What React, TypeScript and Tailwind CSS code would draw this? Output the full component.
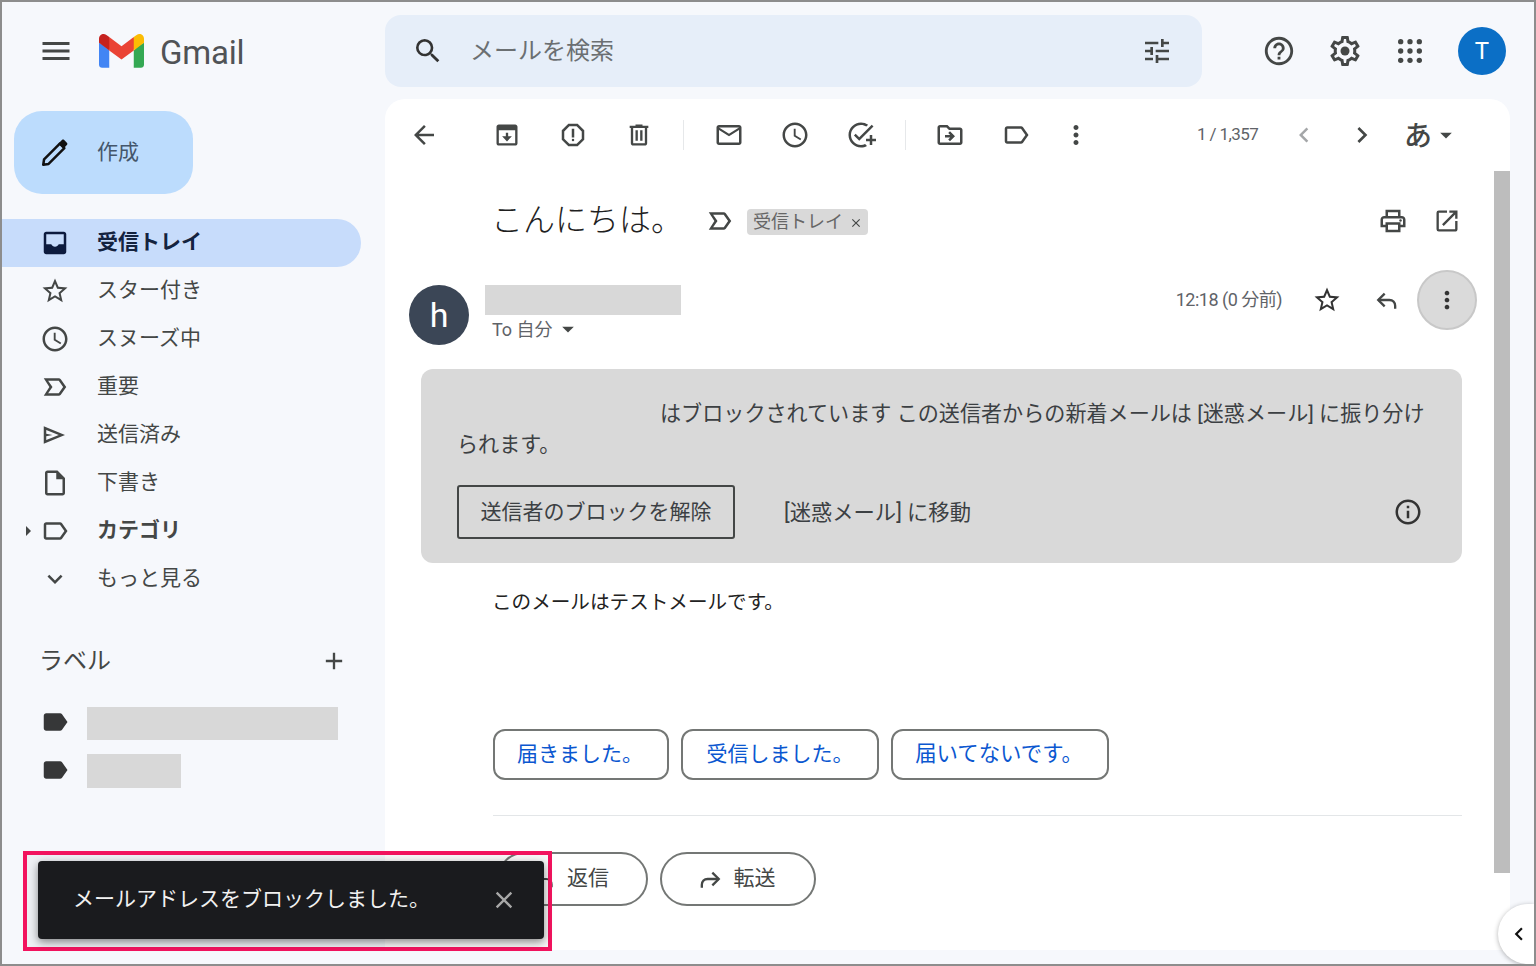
import React from 'react';
import {
  MdAdd,
  MdArrowBack,
  MdArrowDropDown,
  MdArrowRight,
  MdChevronLeft,
  MdChevronRight,
  MdClose,
  MdExpandMore,
  MdHelpOutline,
  MdLabel,
  MdMenu,
  MdMoreVert,
  MdOpenInNew,
  MdOutlineAccessTime,
  MdOutlineAddTask,
  MdOutlineDriveFileMove,
  MdOutlineEmail,
  MdOutlineInfo,
  MdOutlineInsertDriveFile,
  MdOutlineLabel,
  MdOutlinePrint,
  MdOutlineReport,
  MdSearch,
  MdStarBorder,
  MdTune,
} from 'react-icons/md';

type IconProps = { size?: number; color?: string; className?: string };
type IconLike = React.ComponentType<IconProps>;

const GmailLogo = () => (
  <svg viewBox="0 0 256 193" className="h-[34px] w-[45px]">
    <path fill="#4285F4" d="M58.182 192.05V93.14L27.507 65.077 0 49.504v125.091c0 9.658 7.825 17.455 17.455 17.455h40.727Z" />
    <path fill="#34A853" d="M197.818 192.05h40.727c9.659 0 17.455-7.826 17.455-17.455V49.505l-31.156 17.837-27.026 25.798v98.91Z" />
    <path fill="#EA4335" d="m58.182 93.14-4.174-38.647 4.174-36.989L128 69.868l69.818-52.364 4.669 34.992-4.669 40.644L128 145.504z" />
    <path fill="#FBBC04" d="M197.818 17.504V93.14L256 49.504V26.231c0-21.585-24.64-33.89-41.89-20.945l-16.292 12.218Z" />
    <path fill="#C5221F" d="m0 49.504 26.759 20.07L58.182 93.14V17.504L41.89 5.286C24.61-7.66 0 4.646 0 26.23v23.273Z" />
  </svg>
);

const PencilIcon = () => (
  <svg viewBox="0 0 24 24" className="h-[32px] w-[32px]">
    <path d="M3.2 20.8l.6-4L15.6 5l3.4 3.4L7.2 20.2z" fill="none" stroke="#111" strokeWidth="1.9" strokeLinejoin="round" />
    <path d="M14.6 4.8l2.6-2.5c.5-.5 1.2-.5 1.7 0l2 2c.5.5.5 1.2 0 1.7l-2.5 2.6z" fill="#111" />
  </svg>
);

const ArchiveIcon = ({ size = 24, color = '#444746', className }: IconProps) => (
  <svg viewBox="0 0 24 24" width={size} height={size} fill={color} className={className}>
    <path d="M19 3H5c-1.1 0-2 .9-2 2v14c0 1.1.9 2 2 2h14c1.1 0 2-.9 2-2V5c0-1.1-.9-2-2-2zm0 16H5V8h14v11z" />
    <path d="M12 17.5L7.8 13H11v-3h2v3h3.2z" />
  </svg>
);

const DeleteIcon = ({ size = 24, color = '#444746', className }: IconProps) => (
  <svg viewBox="0 0 24 24" width={size} height={size} fill={color} className={className}>
    <path d="M15 4V3H9v1H4v2h1v13c0 1.1.9 2 2 2h10c1.1 0 2-.9 2-2V6h1V4h-5zm2 15H7V6h10v13zM9 8h2v9H9zm4 0h2v9h-2z" />
  </svg>
);

const InboxIcon = ({ size = 24, color = '#444746', className }: IconProps) => (
  <svg viewBox="0 0 24 24" width={size} height={size} fill={color} className={className}>
    <path d="M19 3H5c-1.1 0-2 .9-2 2v14c0 1.1.9 2 2 2h14c1.1 0 2-.9 2-2V5c0-1.1-.9-2-2-2zm0 10h-4c-.7 1.3-1.6 2-3 2s-2.3-.7-3-2H5V5h14v8z" />
  </svg>
);

const ImportantIcon = ({ size = 24, color = '#444746', className }: IconProps) => (
  <svg viewBox="0 0 24 24" width={size} height={size} fill={color} className={className}>
    <path d="M15 19H3l4.5-7L3 5h12c.65 0 1.26.31 1.63.84L21 12l-4.37 6.16c-.37.53-.98.84-1.63.84zm-8.5-2H15l3.5-5L15 7H6.5l3.5 5-3.5 5z" />
  </svg>
);

const SendIcon = ({ size = 24, color = '#444746', className }: IconProps) => (
  <svg viewBox="0 0 24 24" width={size} height={size} fill={color} className={className}>
    <path d="M3 5v14l17-7L3 5zm2 3l10 4-10 4v-3l5-1-5-1V8z" />
  </svg>
);

const ReplyIcon = ({ size = 24, color = '#444746', className }: IconProps) => (
  <svg viewBox="0 0 24 24" width={size} height={size} fill="none" stroke={color} strokeWidth="2" className={className}>
    <path d="M10 6.5L4.5 12l5.5 5.5" />
    <path d="M4.5 12H14c3 0 5 2 5 5v2.5" />
  </svg>
);

const ForwardIcon = () => (
  <svg viewBox="0 0 24 24" className="h-[28px] w-[28px]" fill="none" stroke="#444746" strokeWidth="2">
    <path d="M14 6.5l5.5 5.5-5.5 5.5" />
    <path d="M19.5 12H10c-3 0-5 2-5 5v2.5" />
  </svg>
);

const GearIcon = ({ size = 24, color = '#444746', className }: IconProps) => (
  <svg viewBox="0 0 24 24" width={size} height={size} fill={color} className={className}>
    <path d="M19.43 12.98c.04-.32.07-.64.07-.98 0-.34-.03-.66-.07-.98l2.11-1.65c.19-.15.24-.42.12-.64l-2-3.46c-.09-.16-.26-.25-.44-.25-.06 0-.12.01-.17.03l-2.49 1c-.52-.4-1.08-.73-1.69-.98l-.38-2.65C14.46 2.18 14.25 2 14 2h-4c-.25 0-.46.18-.49.42l-.38 2.65c-.61.25-1.17.59-1.69.98l-2.49-1c-.06-.02-.12-.03-.18-.03-.17 0-.34.09-.43.25l-2 3.46c-.13.22-.07.49.12.64l2.11 1.65c-.04.32-.07.65-.07.98 0 .33.03.66.07.98l-2.11 1.65c-.19.15-.24.42-.12.64l2 3.46c.09.16.26.25.44.25.06 0 .12-.01.17-.03l2.49-1c.52.4 1.08.73 1.69.98l.38 2.65c.03.24.24.42.49.42h4c.25 0 .46-.18.49-.42l.38-2.65c.61-.25 1.17-.59 1.69-.98l2.49 1c.06.02.12.03.18.03.17 0 .34-.09.43-.25l2-3.46c.12-.22.07-.49-.12-.64l-2.11-1.65zm-1.98-1.71c.04.31.05.52.05.73 0 .21-.02.43-.05.73l-.14 1.13.89.7 1.08.84-.7 1.21-1.27-.51-1.04-.42-.9.68c-.43.32-.84.56-1.25.73l-1.06.43-.16 1.13-.2 1.35h-1.4l-.19-1.35-.16-1.13-1.06-.43c-.43-.18-.83-.41-1.23-.71l-.91-.7-1.06.43-1.27.51-.7-1.21 1.08-.84.89-.7-.14-1.13c-.03-.31-.05-.54-.05-.74s.02-.43.05-.73l.14-1.13-.89-.7-1.08-.84.7-1.21 1.27.51 1.04.42.9-.68c.43-.32.84-.56 1.25-.73l1.06-.43.16-1.13.2-1.35h1.39l.19 1.35.16 1.13 1.06.43c.43.18.83.41 1.23.71l.91.7 1.06-.43 1.27-.51.7 1.21-1.07.85-.89.7.14 1.13z" />
    <circle cx="12" cy="12" r="3" />
  </svg>
);

const AppsIcon = ({ size = 24, color = '#444746', className }: IconProps) => (
  <svg viewBox="0 0 24 24" width={size} height={size} fill={color} className={className}>
    {[5, 12, 19].map((y) => [5, 12, 19].map((x) => <circle key={`${x}-${y}`} cx={x} cy={y} r="2" />))}
  </svg>
);

const ToolButton = ({ icon: Icon, className = 'w-[66px]' }: { icon: IconLike; className?: string }) => (
  <span className={`flex items-center justify-center ${className}`}>
    <Icon size={30} color="#444746" />
  </span>
);

const Divider = ({ className }: { className: string }) => <span className={`h-[30px] w-px bg-[#e6e8ea] ${className}`} />;

const navItems: { label: string; icon: IconLike; active?: boolean; bold?: boolean; caret?: boolean }[] = [
  { label: '受信トレイ', icon: InboxIcon, active: true, bold: true },
  { label: 'スター付き', icon: MdStarBorder },
  { label: 'スヌーズ中', icon: MdOutlineAccessTime },
  { label: '重要', icon: ImportantIcon },
  { label: '送信済み', icon: SendIcon },
  { label: '下書き', icon: MdOutlineInsertDriveFile },
  { label: 'カテゴリ', icon: MdOutlineLabel, bold: true, caret: true },
  { label: 'もっと見る', icon: MdExpandMore },
];

const Sidebar = () => (
  <aside className="flex w-[383px] shrink-0 flex-col">
    <button className="ml-[12px] mt-[12px] flex h-[83px] w-[179px] items-center rounded-[28px] bg-[#bcdcfd] pl-[25px] text-[21px] text-[#44566b]">
      <PencilIcon />
      <span className="ml-[26px] mt-[1px]">作成</span>
    </button>

    {/* mailbox list */}
    <nav className="mt-[25px] flex flex-col">
      {navItems.map((item) => {
        const Icon = item.icon;
        return (
          <div
            key={item.label}
            className={`flex h-[48px] w-[359px] items-center rounded-r-full pl-[38px] text-[21px] ${
              item.active ? 'bg-[#c7dcfb] text-[#14233f]' : 'text-[#444746]'
            } ${item.bold ? 'font-bold' : ''} ${item.bold && !item.active ? 'text-[#2a2b2c]' : ''}`}
          >
            <span className="relative flex w-[30px] justify-center">
              {item.caret && (
                <span className="absolute left-[-24px] top-[3px]">
                  <MdArrowRight size={24} color="#444746" />
                </span>
              )}
              <Icon size={30} color={item.active ? '#0d1b3e' : '#444746'} />
            </span>
            <span className="ml-[27px] whitespace-nowrap">{item.label}</span>
          </div>
        );
      })}
    </nav>

    {/* labels */}
    <div className="ml-[37px] mr-[37px] mt-[40px] flex h-[36px] items-center justify-between text-[24px] text-[#444746]">
      <span>ラベル</span>
      <MdAdd size={28} color="#444746" />
    </div>
    <div className="mt-[28px] flex h-[33px] items-center pl-[38px]">
      <span className="-mt-[4px] flex w-[30px] justify-center">
        <MdLabel size={30} color="#363738" />
      </span>
      <span className="ml-[17px] h-[33px] w-[251px] bg-[#d8d8d8]" />
    </div>
    <div className="mt-[14px] flex h-[34px] items-center pl-[38px]">
      <span className="-mt-[2px] flex w-[30px] justify-center">
        <MdLabel size={30} color="#363738" />
      </span>
      <span className="ml-[17px] h-[34px] w-[94px] bg-[#d8d8d8]" />
    </div>
  </aside>
);

const Toolbar = () => (
  <div className="flex h-[72px] shrink-0 items-center pl-[6px]">
    <ToolButton icon={MdArrowBack} />
    <span className="ml-[17px] flex w-[66px] justify-center">
      <ArchiveIcon size={28} />
    </span>
    <ToolButton icon={MdOutlineReport} />
    <span className="flex w-[66px] justify-center">
      <DeleteIcon size={28} />
    </span>
    <Divider className="ml-[11px] mr-[12px]" />
    <ToolButton icon={MdOutlineEmail} />
    <ToolButton icon={MdOutlineAccessTime} />
    <ToolButton icon={MdOutlineAddTask} />
    <Divider className="ml-[11px] mr-[11px]" />
    <ToolButton icon={MdOutlineDriveFileMove} />
    <ToolButton icon={MdOutlineLabel} />
    <ToolButton icon={MdMoreVert} className="w-[54px]" />
    <span className="ml-[94px] w-[78px] whitespace-nowrap text-[17px] tracking-[-0.6px] text-[#5f6368]">1 / 1,357</span>
    <span className="flex w-[58px] justify-center">
      <MdChevronLeft size={30} color="#a4a6a8" />
    </span>
    <span className="flex w-[58px] justify-center">
      <MdChevronRight size={32} color="#444746" />
    </span>
    <span className="ml-[13px] mt-[4px] text-[28px] font-medium leading-none text-[#444746]">あ</span>
    <MdArrowDropDown size={28} color="#444746" />
  </div>
);

const SenderRow = () => (
  <div className="mt-[27px] flex h-[75px] pl-[24px] pr-[17px]">
    <div className="mt-[15px] flex h-[60px] w-[60px] shrink-0 items-center justify-center rounded-full bg-[#3b4656] text-[34px] text-white">
      h
    </div>
    <div className="ml-[16px] mt-[15px] flex flex-col">
      <span className="h-[30px] w-[196px] bg-[#d8d8d8]" />
      <span className="ml-[7px] flex h-[28px] items-center text-[18px] text-[#5f6368]">
        To 自分
        <MdArrowDropDown size={28} color="#444746" className="ml-[1px]" />
      </span>
    </div>
    <div className="ml-auto flex h-[60px] items-center">
      <span className="-mt-[2px] whitespace-nowrap text-[18px] tracking-[-0.5px] text-[#5f6368]">12:18 (0 分前)</span>
      <span className="ml-[30px] flex w-[30px] justify-center">
        <MdStarBorder size={30} color="#333" />
      </span>
      <span className="ml-[30px] flex w-[30px] justify-center">
        <ReplyIcon size={28} color="#444746" />
      </span>
      <span className="ml-[15px] flex h-[60px] w-[60px] items-center justify-center rounded-full border-2 border-[#c8c8c8] bg-[#dadada]">
        <MdMoreVert size={28} color="#333" />
      </span>
    </div>
  </div>
);

const BlockedBanner = () => (
  <div className="ml-[36px] mr-[32px] mt-[24px] h-[194px] rounded-xl bg-[#d9d9d9] pl-[36px] pr-[36px] pt-[29px] text-[#3c4043]">
    <p className="indent-[203px] text-[21.1px] leading-[31px] whitespace-nowrap">
      はブロックされています この送信者からの新着メールは [迷惑メール] に振り分け
      <br />
      られます。
    </p>
    <div className="mt-[25px] flex items-center">
      <button className="flex h-[54px] w-[278px] shrink-0 items-center justify-center rounded-[3px] border-2 border-[#444746] pt-[1px] text-[21px] text-[#3c4043]">
        送信者のブロックを解除
      </button>
      <span className="ml-[49px] mt-[1px] whitespace-nowrap text-[21.3px]">[迷惑メール] に移動</span>
      <span className="ml-auto mr-[3px]">
        <MdOutlineInfo size={30} color="#333" />
      </span>
    </div>
  </div>
);

const App = () => {
  return (
    <div className="relative flex h-screen w-screen flex-col overflow-hidden border-2 border-[#8d8d8d] bg-[#f6f8fc] font-['Roboto','Noto_Sans_CJK_JP',sans-serif]">
      {/* top bar */}
      <header className="flex h-[97px] shrink-0 items-center">
        <div className="mt-[1px] flex w-[383px] shrink-0 items-center pl-[36px]">
          <MdMenu size={36} color="#444746" />
          <span className="ml-[25px]">
            <GmailLogo />
          </span>
          <span className="ml-[16px] mt-[2px] text-[33px] leading-none tracking-[-0.2px] text-[#505356]">Gmail</span>
        </div>
        <div className="mt-[1px] flex h-[72px] w-[817px] items-center rounded-2xl bg-[#e6eef9] pl-[27px] pr-[29px]">
          <MdSearch size={32} color="#333" />
          <span className="ml-[26px] text-[24px] text-[#6b6f72]">メールを検索</span>
          <MdTune size={32} color="#444746" className="ml-auto" />
        </div>
        <div className="mt-[1px] ml-[60px] flex items-center">
          <MdHelpOutline size={34} color="#444746" />
          <GearIcon size={36} color="#444746" className="ml-[31px]" />
          <AppsIcon size={32} color="#444746" className="ml-[31px]" />
          <span className="ml-[32px] flex h-[48px] w-[48px] items-center justify-center rounded-full bg-[#0b6fc6] text-[24px] text-white">
            T
          </span>
        </div>
      </header>

      <div className="flex min-h-0 flex-1 pr-[24px] pb-[14px]">
        <Sidebar />

        {/* message panel */}
        <main className="flex min-w-0 flex-1 flex-col overflow-hidden rounded-t-[20px] bg-white">
          <Toolbar />
          <div className="flex min-h-0 flex-1">
            <div className="min-w-0 flex-1">
              {/* subject */}
              <div className="mt-[24px] flex h-[48px] items-center pl-[106px] pr-[33px]">
                <h1 className="mt-[2px] whitespace-nowrap text-[32px] font-light text-[#1f1f1f]">こんにちは。</h1>
                <ImportantIcon size={30} color="#444746" className="ml-[22px] mt-[3px]" />
                <span className="ml-[12px] mt-[5px] flex h-[26px] items-center rounded-[4px] bg-[#d9d9d9] pl-[6px] pr-[5px] text-[18px] text-[#666]">
                  受信トレイ
                  <MdClose size={14} color="#444746" className="ml-[6px] mt-[3px]" />
                </span>
                <MdOutlinePrint size={30} color="#444746" className="ml-auto mt-[4px]" />
                <MdOpenInNew size={28} color="#444746" className="ml-[25px] mt-[4px]" />
              </div>

              <SenderRow />
              <BlockedBanner />

              <p className="ml-[107px] mt-[26px] h-[28px] text-[19.6px] leading-[28px] text-[#222]">
                このメールはテストメールです。
              </p>

              {/* smart replies */}
              <div className="ml-[108px] mt-[112px] flex gap-[12px]">
                <span className="flex h-[51px] w-[176px] items-center justify-center rounded-xl border-2 border-[#747775] pr-[2px] text-[21px] text-[#0b57d0]">
                  届きました。
                </span>
                <span className="flex h-[51px] w-[198px] items-center justify-center rounded-xl border-2 border-[#747775] text-[21px] text-[#0b57d0]">
                  受信しました。
                </span>
                <span className="flex h-[51px] w-[218px] items-center justify-center rounded-xl border-2 border-[#747775] pr-[2px] text-[21.4px] text-[#0b57d0]">
                  届いてないです。
                </span>
              </div>

              <div className="ml-[108px] mr-[32px] mt-[35px] h-px bg-[#e3e6e8]" />

              <div className="ml-[112px] mt-[36px] flex gap-[12px]">
                <span className="flex h-[54px] w-[151px] items-center justify-center rounded-full border-2 border-[#747775] pr-[5px] text-[21px] text-[#444746]">
                  <ReplyIcon size={26} color="#444746" className="mr-[10px]" />
                  返信
                </span>
                <span className="flex h-[54px] w-[156px] items-center justify-center rounded-full border-2 border-[#747775] pr-[5px] text-[21px] text-[#444746]">
                  <ForwardIcon />
                  <span className="ml-[10px]">転送</span>
                </span>
              </div>
            </div>

            {/* scrollbar */}
            <div className="w-[16px] shrink-0">
              <div className="h-[702px] w-full bg-[#bdbdbd]" />
            </div>
          </div>
        </main>
      </div>

      {/* toast with the highlight frame */}
      <div className="absolute bottom-[13px] left-[21px] flex h-[100px] w-[529px] items-start border-[4px] border-[#f2135e] bg-[#00000008] pl-[11px] pt-[6px]">
        <div className="flex h-[78px] w-[506px] items-center rounded-[4px] bg-[#1a1b1e] pl-[35px] pr-[26px] text-[21px] text-[#f1f1f1] shadow-[0_3px_8px_rgba(0,0,0,0.45)]">
          <span className="whitespace-nowrap">メールアドレスをブロックしました。</span>
          <MdClose size={28} color="#a8a8a8" className="ml-auto" />
        </div>
      </div>

      {/* side panel toggle */}
      <div className="absolute bottom-0 right-0 flex h-[60px] w-[36px] items-center justify-center rounded-l-full bg-white pl-[6px] shadow-[0_1px_5px_rgba(0,0,0,0.3)]">
        <MdChevronLeft size={26} color="#111" />
      </div>
    </div>
  );
};

export default App;
